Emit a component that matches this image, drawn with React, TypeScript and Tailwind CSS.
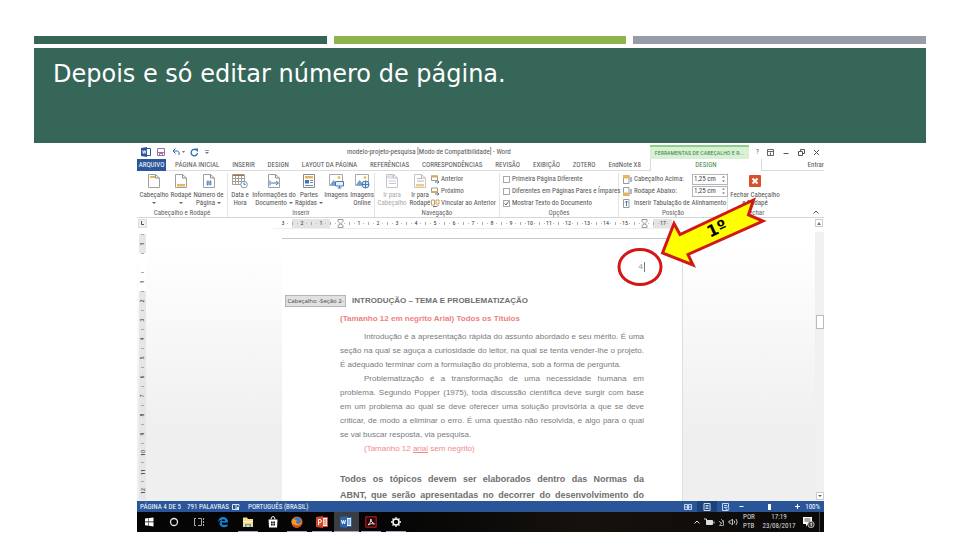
import type { ReactNode } from "react";
import clsx from "clsx";

const tabs = [
  "PÁGINA INICIAL", "INSERIR", "DESIGN", "LAYOUT DA PÁGINA", "REFERÊNCIAS",
  "CORRESPONDÊNCIAS", "REVISÃO", "EXIBIÇÃO", "ZOTERO", "EndNote X8",
];

const rulerMarks = ["3", "2", "1", "", "1", "2", "3", "4", "5", "6", "7", "8", "9", "10", "11", "12", "13", "14", "15", "", "17"];
const sideMarks = ["1", "", "1", "2", "3", "4", "5", "6", "7", "8", "9", "10", "11", "12"];

const introLines = [
  { text: "Introdução é a apresentação rápida do assunto abordado e seu mérito. É uma", indent: true, fill: true },
  { text: "seção na qual se aguça a curiosidade do leitor, na qual se tenta vender-lhe o projeto.", fill: true },
  { text: "É adequado terminar com a formulação do problema, sob a forma de pergunta." },
  { text: "Problematização é a transformação de uma necessidade humana em", indent: true, fill: true },
  { text: "problema. Segundo Popper (1975), toda discussão científica deve surgir com base", fill: true },
  { text: "em um problema ao qual se deve oferecer uma solução provisória a que se deve", fill: true },
  { text: "criticar, de modo a eliminar o erro. É uma questão não resolvida, e algo para o qual", fill: true },
  { text: "se vai buscar resposta, via pesquisa." },
];

function PageIcon({ children, faded }: { children?: ReactNode; faded?: boolean }) {
  return (
    <svg viewBox="0 0 16 16" className={clsx("h-4 w-4", faded && "opacity-60")} fill="none">
      <path d="M2.500 1.500h7l4 3.500v9.500h-11z" fill="#fff" stroke="#a0a0a0" />
      <path d="M9.500 1.500v3.500h4" stroke="#8a8a8a" />
      {children}
    </svg>
  );
}

function CalendarIcon() {
  return (
    <svg viewBox="0 0 16 16" className="h-4 w-4" fill="none">
      <path d="M.5 2.500h12v9H.5zM.5 5.500h12M.5 8.500h12M3.500 2.500v9M6.500 2.500v9M9.500 2.500v9" stroke="#a79f95" />
      <path d="M.5 2h12" stroke="#8c6b4f" strokeWidth="1.500" />
      <circle cx="12" cy="11.500" r="3.300" fill="#fff" stroke="#7b95b8" />
      <path d="M12 9.500v2h1.500" stroke="#6d6d6d" />
    </svg>
  );
}

function PictureIcon({ online }: { online?: boolean }) {
  return (
    <svg viewBox="0 0 16 16" className="h-4 w-4" fill="none">
      <path d="M1.500 1.500h13v11h-13z" fill="#fff" stroke="#aaa" />
      <circle cx="11" cy="4.500" r="1.500" fill="#edc15c" />
      <path d="M2 12l3.500-5 2.500 3 2-2 2 4z" fill="#6f9fd2" />
      {online ? (
        <>
          <circle cx="11.500" cy="11.500" r="3.500" fill="#dbe9f8" stroke="#4379b8" />
          <path d="M8 11.500h7M11.500 8v7" stroke="#4379b8" />
        </>
      ) : (
        <>
          <path d="M7.500 8.500h8v4.500h-8z" fill="#e7f1fb" stroke="#4379b8" />
          <path d="M9.500 15h4M11.500 13v2" stroke="#4379b8" />
        </>
      )}
    </svg>
  );
}

function StepIcon({ kind }: { kind: "up" | "down" | "link" }) {
  return (
    <svg viewBox="0 0 9 9" className="h-[9px] w-[9px] shrink-0" fill="none">
      {kind === "link" ? (
        <>
          <path d="M.5 1h3v5h-3zM5 1h3v4H5z" stroke="#c9a15a" />
          <path d="M2 7.500h4l1.500-1.500" stroke="#777" />
        </>
      ) : (
        <>
          <path d="M.5 1h6v4.500h-6z" stroke="#999" />
          <path d={kind === "up" ? "M0 1.500h7" : "M0 5h7"} stroke="#dda94c" strokeWidth="2" />
          <path d="M4 7h4M6.500 5.500l1.500 1.500-1.500 1.500" stroke="#4379b8" />
        </>
      )}
    </svg>
  );
}

function MarginIcon({ kind }: { kind: "top" | "bottom" | "tab" }) {
  return (
    <svg viewBox="0 0 9 9" className="h-[9px] w-[9px] shrink-0" fill="none">
      <path d="M.5.5h5.500v8H.5z" stroke="#999" />
      {kind === "top" && <path d="M0 0h6.500v3.500H0z" fill="#e6b65c" />}
      {kind === "bottom" && <path d="M0 5.500h6.500V9H0z" fill="#e6b65c" />}
      {kind === "tab" ? <path d="M3.500 2v5M2 3.500L3.500 2 5 3.500" stroke="#4379b8" /> : <path d="M8 2v5" stroke="#4379b8" />}
    </svg>
  );
}

function BigButton({ icon, lines, caret, faded, className }: { icon: ReactNode; lines: string[]; caret?: boolean; faded?: boolean; className: string }) {
  return (
    <button type="button" className={clsx("flex shrink-0 flex-col items-center whitespace-nowrap", faded && "text-[#aaa]", className)}>
      {icon}
      {lines.map((line, i) => (
        <span key={line} className="flex h-2 items-center gap-[2px] leading-2 first-of-type:mt-[2px]">
          {line}
          {caret && lines.length > 1 && i === lines.length - 1 && <Caret />}
        </span>
      ))}
      {caret && lines.length === 1 && <span className="flex h-2 items-center"><Caret /></span>}
    </button>
  );
}

function Caret() {
  return <svg viewBox="0 0 4 3" className="h-[3px] w-1"><path d="M0 0h4L2 2z" fill="#666" /></svg>;
}

function Group({ label, className, children }: { label: string; className: string; children: ReactNode }) {
  return (
    <section className={clsx("flex shrink-0 flex-col border-r border-[#e4e4e4]", className)}>
      <div className="flex h-9 shrink-0 items-start">{children}</div>
      <h2 className="text-center leading-2 text-[#666]">{label}</h2>
    </section>
  );
}

function Option({ label, checked }: { label: string; checked?: boolean }) {
  return (
    <label className="flex h-3 items-center gap-[2px] whitespace-nowrap">
      <span className="grid">
        <input type="checkbox" defaultChecked={checked} className="peer col-start-1 row-start-1 h-[7px] w-[7px] appearance-none border border-[#a8a8a8] bg-white" />
        <svg viewBox="0 0 7 7" className="pointer-events-none invisible col-start-1 row-start-1 h-[7px] w-[7px] peer-checked:visible" fill="none">
          <path d="M1.500 3.500L3 5l2.500-3.500" stroke="#555" />
        </svg>
      </span>
      {label}
    </label>
  );
}

function Distance({ id }: { id: string }) {
  return (
    <span className="flex h-[11px] w-9 items-center border border-[#b5b5b5] bg-white">
      <input id={id} defaultValue="1,25 cm" className="w-[27px] pl-px leading-2 text-[#444] outline-none" />
      <button type="button" aria-label="Ajustar" className="flex h-full w-[7px] items-center justify-center">
        <svg viewBox="0 0 5 8" className="h-2 w-[5px]" fill="#666"><path d="M1 2.500h3L2.500 1zM1 5.500h3L2.500 7z" /></svg>
      </button>
    </span>
  );
}

function TitleBar() {
  return (
    <header className="flex h-[14px] items-center">
      <div className="flex w-[210px] shrink-0 items-center pl-1">
        <svg viewBox="0 0 10 10" className="h-[10px] w-[10px]" fill="none">
          <path d="M5.500 1.500h4v7h-4" fill="#fff" stroke="#2b579a" />
          <path d="M0 1l6-1v10L0 9z" fill="#2b579a" />
          <path d="M1.500 3.500l.8 3 .9-3 .9 3 .8-3" stroke="#fff" strokeWidth=".8" />
        </svg>
        <button type="button" aria-label="Salvar" className="ml-[6px]">
          <svg viewBox="0 0 8 8" className="h-2 w-2" fill="none"><path d="M.5.5h7v7h-7z" stroke="#9a6fa8" /><path d="M1 4.500h6M2.500 7.500v-2h3v2" stroke="#9a6fa8" /></svg>
        </button>
        <button type="button" aria-label="Desfazer" className="ml-[7px]">
          <svg viewBox="0 0 13 8" className="h-2 w-[13px]" fill="none"><path d="M3.500.5L1 3l2.500 2.500M1 3h4.500q2.500.5 1.500 4" stroke="#2b6cb8" /><path d="M10 3h3l-1.500 2z" fill="#777" /></svg>
        </button>
        <button type="button" aria-label="Refazer" className="ml-[5px]">
          <svg viewBox="0 0 9 9" className="h-[9px] w-[9px]" fill="none"><path d="M6.500 2.300A3.200 3.200 0 1 0 7.500 5" stroke="#2b6cb8" strokeWidth="1.300" /><path d="M4.500.5h3.500V4z" fill="#2b6cb8" /></svg>
        </button>
        <svg viewBox="0 0 5 5" className="ml-[6px] h-[5px] w-[5px]"><path d="M0 0h4v.8H0zM0 2h4L2 4z" fill="#777" /></svg>
      </div>
      <h1 className="shrink-0 whitespace-nowrap">modelo-projeto-pesquisa [Modo de Compatibilidade] - Word</h1>
      <div className="ml-auto flex h-full shrink-0 items-center">
        <div className="flex h-full w-[99px] items-center justify-center whitespace-nowrap border-t-2 border-[#8fce89] bg-[#d8f0d4] text-[6px] text-[#3c8a3c]">
          FERRAMENTAS DE CABEÇALHO E R...
        </div>
        <div className="flex w-[75px] items-center justify-between pr-1 pl-[7px] text-[#555]">
          <button type="button">?</button>
          <button type="button" aria-label="Opções da faixa"><svg viewBox="0 0 7 7" className="h-[7px] w-[7px]" fill="none" stroke="#666"><path d="M.5.500h6v6h-6zM.5 2.500h6M3.500 6V3.500" /></svg></button>
          <button type="button" aria-label="Minimizar"><svg viewBox="0 0 7 7" className="h-[7px] w-[7px]" stroke="#555"><path d="M1.500 4.500h5" /></svg></button>
          <button type="button" aria-label="Restaurar"><svg viewBox="0 0 7 7" className="h-[7px] w-[7px]" fill="none" stroke="#555"><path d="M.5 2.500h4v4h-4zM2.500 2.500v-2h4v4h-2" /></svg></button>
          <button type="button" aria-label="Fechar"><svg viewBox="0 0 7 7" className="h-[7px] w-[7px]" stroke="#555"><path d="M1 1l5 5M6 1L1 6" /></svg></button>
        </div>
      </div>
    </header>
  );
}

function TabRow() {
  return (
    <nav className="flex h-3 items-stretch">
      <button type="button" className="w-[29px] shrink-0 bg-[#2b579a] text-white">ARQUIVO</button>
      <div className="flex w-[484px] shrink-0 items-center justify-between border-b border-[#dcdcdc] pr-[9px] pl-[9px]">
        {tabs.map((tab) => (
          <button key={tab} type="button" className="whitespace-nowrap">{tab}</button>
        ))}
      </div>
      <button type="button" className="w-[112px] shrink-0 border-x border-[#dcdcdc] text-[#3c8a3c]">DESIGN</button>
      <div className="flex flex-1 items-center justify-end overflow-hidden border-b border-[#dcdcdc]">
        <button type="button">Entrar</button>
      </div>
    </nav>
  );
}

function Ribbon() {
  return (
    <div className="flex h-[47px] border-b border-[#d6d6d6] pt-[2px]">
      <Group label="Cabeçalho e Rodapé" className="w-[91px]">
        <BigButton className="w-[34px]" lines={["Cabeçalho"]} caret icon={<PageIcon><path d="M4 3h5v2H4z" fill="#e6b65c" /></PageIcon>} />
        <BigButton className="w-5" lines={["Rodapé"]} caret icon={<PageIcon><path d="M4 11h8v2.500H4z" fill="#e6b65c" /></PageIcon>} />
        <BigButton className="w-[35px]" lines={["Número de", "Página"]} caret icon={<PageIcon><path d="M5.500 7.500h5v5h-5z" fill="#dce9f7" /><path d="M7 7.500l-.5 5M9.500 7.500l-.5 5M5.500 9h5M5.500 11h5" stroke="#3f74b5" strokeWidth=".8" /></PageIcon>} />
      </Group>
      <Group label="Inserir" className="w-[147px]">
        <BigButton className="w-6" lines={["Data e", "Hora"]} icon={<CalendarIcon />} />
        <BigButton className="w-11" lines={["Informações do", "Documento"]} caret icon={<PageIcon><path d="M4 7.500v5M5 10h7M10 8l2.500 2-2.500 2" stroke="#3f74b5" /></PageIcon>} />
        <BigButton className="w-[26px]" lines={["Partes", "Rápidas"]} caret icon={
          <svg viewBox="0 0 16 16" className="h-4 w-4" fill="none">
            <path d="M2.500 1.500h11v13h-11z" fill="#fff" stroke="#8a8a8a" />
            <path d="M4 3h8v2.500H4z" fill="#e6b65c" />
            <path d="M4 7h4v3.500H4z" fill="#3f74b5" />
            <path d="M9 7.500h3M9 9.500h3M4 12.500h8" stroke="#6b8fbd" />
          </svg>
        } />
        <BigButton className="w-7" lines={["Imagens"]} icon={<PictureIcon />} />
        <BigButton className="w-6" lines={["Imagens", "Online"]} icon={<PictureIcon online />} />
      </Group>
      <Group label="Navegação" className="w-[125px]">
        <BigButton className="w-[34px]" faded lines={["Ir para", "Cabeçalho"]} icon={<PageIcon faded><path d="M4 3h5v2H4zM5 8h7M5 10.500h7" stroke="#b49bbb" /></PageIcon>} />
        <BigButton className="w-[22px]" lines={["Ir para", "Rodapé"]} icon={<PageIcon faded><path d="M4 11h8v2.500H4z" fill="#e6a93c" /><path d="M5 5.500h5M5 8h7" stroke="#888" /></PageIcon>} />
        <div className="flex flex-col">
          {([["up", "Anterior"], ["down", "Próximo"], ["link", "Vincular ao Anterior"]] as const).map(([kind, label]) => (
            <button key={kind} type="button" className="flex h-3 items-center gap-px whitespace-nowrap"><StepIcon kind={kind} />{label}</button>
          ))}
        </div>
      </Group>
      <Group label="Opções" className="w-[119px]">
        <div className="flex flex-col pl-[3px]">
          <Option label="Primeira Página Diferente" />
          <Option label="Diferentes em Páginas Pares e Ímpares" />
          <Option label="Mostrar Texto do Documento" checked />
        </div>
      </Group>
      <Group label="Posição" className="w-[109px]">
        <div className="flex flex-col pl-1">
          <div className="flex h-3 items-center gap-[2px]">
            <MarginIcon kind="top" /><label htmlFor="acima" className="w-[56px] whitespace-nowrap">Cabeçalho Acima:</label><Distance id="acima" />
          </div>
          <div className="flex h-3 items-center gap-[2px]">
            <MarginIcon kind="bottom" /><label htmlFor="abaixo" className="w-[56px] whitespace-nowrap">Rodapé Abaixo:</label><Distance id="abaixo" />
          </div>
          <button type="button" className="flex h-3 items-center gap-[2px] whitespace-nowrap"><MarginIcon kind="tab" />Inserir Tabulação de Alinhamento</button>
        </div>
      </Group>
      <section className="flex w-[54px] shrink-0 flex-col">
        <div className="flex h-9 shrink-0 justify-center">
          <BigButton className="w-[50px]" lines={["Fechar Cabeçalho", "e Rodapé"]} icon={
            <svg viewBox="0 0 16 16" className="h-4 w-4" fill="none"><rect x="2" y="2" width="12" height="12" rx="1" fill="#d9512c" /><path d="M5.500 5.500l5 5M10.500 5.500l-5 5" stroke="#fff" strokeWidth="2" /></svg>
          } />
        </div>
        <h2 className="text-center leading-2 text-[#666]">Fechar</h2>
      </section>
      <div className="flex flex-1 items-end justify-end pr-[5px] pb-[3px]">
        <button type="button" aria-label="Recolher"><svg viewBox="0 0 6 4" className="h-1 w-[6px]" fill="none" stroke="#555"><path d="M.5 3.500L3 1l2.500 2.500" /></svg></button>
      </div>
    </div>
  );
}

function Ruler() {
  return (
    <div className="flex h-[14px] items-start">
      <div className="mt-px ml-px flex h-[9px] w-[9px] shrink-0 items-center justify-center border border-[#ddd] bg-[#f0f0f0]">
        <svg viewBox="0 0 5 5" className="h-[5px] w-[5px]" fill="none" stroke="#555"><path d="M1.500 0v3.500H4" /></svg>
      </div>
      <div className="ml-[126px] flex h-[11px] w-[409px] shrink-0 items-center border-b border-[#eee] text-[6px]">
        {rulerMarks.map((mark, i) => (
          <span key={i} className={clsx("flex h-[9px] w-[19px] shrink-0 items-center", i === 1 || i === 2 || i > 19 ? "bg-[#e4e4e4]" : "bg-white")}>
            <i className={clsx("h-[3px] w-px", i > 0 && "bg-[#aaa]")} />
            <i className={clsx("ml-1 h-px w-px", i > 0 && "bg-[#bbb]")} />
            <b className="flex-1 text-center font-normal text-[#333]">
              {mark || <svg viewBox="0 0 7 9" className="mx-auto h-[9px] w-[7px]" fill="#fff" stroke="#999"><path d="M1 .5h5v2L3.500 5 1 2.500zM1 8.500v-2L3.500 5 6 6.500v2z" /></svg>}
            </b>
            <i className="mr-1 h-px w-px bg-[#bbb]" />
          </span>
        ))}
      </div>
      <button type="button" aria-label="Rolar para cima" className="mt-px mr-px ml-auto flex h-2 w-2 items-center justify-center border border-[#ccc] bg-white">
        <svg viewBox="0 0 4 3" className="h-[3px] w-1"><path d="M0 3h4L2 0z" fill="#777" /></svg>
      </button>
    </div>
  );
}

function DocumentPane() {
  return (
    <main className="flex h-[269px] overflow-hidden bg-linear-to-b from-white from-5% to-[#efefef] to-75%">
      <div className="flex w-[11px] shrink-0 flex-col pt-[2px] pl-[2px] text-[6px]">
        {sideMarks.map((mark, i) => (
          <span key={i} className={clsx("flex h-[19px] w-[7px] shrink-0 flex-col items-center", i === 1 || i === 2 ? "bg-white" : "bg-[#e6e6e6]")}>
            <i className="h-px w-[3px] bg-[#aaa]" />
            <b className="flex flex-1 -rotate-90 items-center justify-center font-normal text-[#333]">{mark}</b>
          </span>
        ))}
      </div>
      <div className="ml-[134px] flex w-[401px] shrink-0 flex-col bg-white pt-[6px]">
        <article className="flex-1 border-t border-r border-t-[#c8c8c8] border-r-[#dedede] font-['Liberation_Sans',Arial,sans-serif] text-[8px] text-[#7b7b7b]">
          <div className="flex h-14 items-center justify-end pr-[37px]">
            <span className="border-r border-[#777] pr-px leading-[10px] text-[#999]">4</span>
          </div>
          <div className="flex h-3 items-center gap-[6px] pl-[3px]">
            <span className="flex h-3 w-[61px] items-center justify-center whitespace-nowrap border border-[#b5b5b5] bg-[#e1e1e1] font-['Open_Sans',sans-serif] text-[6px] text-[#444]">Cabeçalho -Seção 2-</span>
            <h2 className="font-bold whitespace-nowrap text-[#707070]">INTRODUÇÃO – TEMA E PROBLEMATIZAÇÃO</h2>
          </div>
          <div className="pr-[38px] pl-[58px] whitespace-nowrap">
            <h3 className="mt-[5px] leading-[14px] font-bold text-[#ee7f7f]">(Tamanho 12 em negrito Arial) Todos os Títulos</h3>
            <div className="mt-1 leading-[14px]">
              {introLines.map((line) => (
                <p key={line.text} className={clsx(line.indent && "pl-6", line.fill && "[text-align-last:justify]")}>{line.text}</p>
              ))}
              <p className="pl-6 text-[#f08a8a]">(Tamanho 12 <u>arial</u> sem negrito)</p>
            </div>
            <div className="mt-[15px] text-[9px] leading-4 font-bold text-[#6f6f6f]">
              <p className="[text-align-last:justify]">Todos os tópicos devem ser elaborados dentro das Normas da</p>
              <p className="[text-align-last:justify]">ABNT, que serão apresentadas no decorrer do desenvolvimento do</p>
            </div>
          </div>
        </article>
      </div>
      <div className="ml-auto flex w-[9px] flex-col items-center bg-[#f0f0f0]">
        <div className="mt-[83px] h-[14px] w-2 border border-[#bbb] bg-white" />
        <button type="button" aria-label="Rolar para baixo" className="mt-auto mb-px flex h-2 w-2 items-center justify-center border border-[#ccc] bg-white">
          <Caret />
        </button>
      </div>
    </main>
  );
}

function StatusBar() {
  return (
    <footer className="flex h-[11px] items-center bg-[#2a5599] text-white">
      <span className="w-[50px] shrink-0 whitespace-nowrap pl-[3px]">PÁGINA 4 DE 5</span>
      <span className="w-[45px] shrink-0 whitespace-nowrap">791 PALAVRAS</span>
      <svg viewBox="0 0 8 8" className="h-2 w-2" fill="none" stroke="#dfe8f5"><path d="M4 1.500H.5v5H4zM4 1.500h3v2M4 6.500h3M5 4l2 2M7 4L5 6" /></svg>
      <span className="ml-2 whitespace-nowrap">PORTUGUÊS (BRASIL)</span>
      <div className="ml-auto flex shrink-0 items-center">
        <button type="button" aria-label="Leitura" className="flex w-[18px] justify-center"><svg viewBox="0 0 8 8" className="h-2 w-2" fill="none" stroke="#c9d8ee"><path d="M.5 1.500h3v5h-3zM4.500 1.500h3v5h-3zM1 4h2M5 4h2" /></svg></button>
        <button type="button" aria-label="Layout" className="flex h-[11px] w-5 items-center justify-center bg-[#1c4379]"><svg viewBox="0 0 8 8" className="h-2 w-2" fill="none" stroke="#c9d8ee"><path d="M1 .5h6v7H1zM2.500 2.500h3M2.500 4h3M2.500 5.500h3" /></svg></button>
        <button type="button" aria-label="Web" className="flex w-[18px] justify-center"><svg viewBox="0 0 8 8" className="h-2 w-2" fill="none" stroke="#c9d8ee"><path d="M6.500 7.500h-6v-7h6V4M2 2.500h3M2 4.500h2" /><circle cx="5.500" cy="5.500" r="1.500" /></svg></button>
        <button type="button" aria-label="Diminuir" className="flex w-3 justify-center"><svg viewBox="0 0 5 5" className="h-[5px] w-[5px]" stroke="#fff"><path d="M.5 2.500h4" /></svg></button>
        <input type="range" aria-label="Zoom" className="h-2 w-11 appearance-none bg-transparent [&::-webkit-slider-thumb]:h-[6px] [&::-webkit-slider-thumb]:w-[3px] [&::-webkit-slider-thumb]:appearance-none [&::-webkit-slider-thumb]:bg-white" />
        <button type="button" aria-label="Aumentar" className="flex w-3 justify-center"><svg viewBox="0 0 5 5" className="h-[5px] w-[5px]" stroke="#fff"><path d="M0 2.500h5M2.500 0v5" /></svg></button>
        <span className="w-[21px] pr-1 text-right">100%</span>
      </div>
    </footer>
  );
}

function OfficeTile({ color, letter }: { color: string; letter: ReactNode }) {
  return (
    <svg viewBox="0 0 12 12" className="h-3 w-3" fill="none">
      <path d="M6 1.500h5.500v9H6z" fill="#fff" stroke={color} />
      <path d="M7.500 4h3M7.500 6h3M7.500 8h3" stroke={color} />
      <path d="M0 1l7-1v12l-7-1z" fill={color} />
      {letter}
    </svg>
  );
}

const taskIcons = [
  { name: "Iniciar", art: <svg viewBox="0 0 12 12" className="h-3 w-3" fill="#fff"><path d="M2 2.500l3.500-.5v3.500H2zM6 2l4.500-.5v4H6zM2 6.200h3.500v3.500L2 9.200zM6 6.200h4.500v4.300L6 9.800z" /></svg> },
  { name: "Cortana", art: <svg viewBox="0 0 12 12" className="h-3 w-3" fill="none" stroke="#e8e8e8" strokeWidth="1.300"><circle cx="6" cy="6" r="3.500" /></svg> },
  { name: "Visão de tarefas", art: <svg viewBox="0 0 12 12" className="h-3 w-3" fill="none" stroke="#aaa"><path d="M3 2.500H1.500v7H3M5 2.500h3.500v7H5M10.500 2v2M10.500 5v2M10.500 8v2" /></svg> },
  { name: "Edge", art: <svg viewBox="0 0 12 12" className="h-3 w-3" fill="none"><path d="M1 6Q2 .8 6.500 1 11 1.500 11 6.500H4.500Q4.800 9 7 9t3.500-.8v2Q8 11.700 5.500 11 2 9.800 2.800 6.200q.5-1.900 2.200-2.600Q2.500 3.800 1 6zM4.700 5h3.600Q8.200 3.200 6.500 3.200T4.700 5z" fill="#1683d8" fillRule="evenodd" /></svg> },
  { name: "Explorador", open: true, art: <svg viewBox="0 0 12 12" className="h-3 w-3"><path d="M1 1.500h4l1 1.500h5v8H1z" fill="#f7dd86" /><path d="M1 5h10v1H1z" fill="#fff4c6" /><path d="M3 11V8h6v3H7.500V9h-3v2z" fill="#4d9fd8" /></svg> },
  { name: "Loja", art: <svg viewBox="0 0 12 12" className="h-3 w-3" fill="none"><path d="M1.500 3.500h9l-.5 8H2z" fill="#fff" /><path d="M4 3.500q0-3 2-3t2 3" stroke="#fff" /><path d="M4 5.500h1.700v1.700H4zM6.300 5.500H8v1.700H6.300zM4 7.800h1.700v1.700H4zM6.300 7.800H8v1.700H6.300z" fill="#111" /></svg> },
  { name: "Firefox", open: true, art: <svg viewBox="0 0 12 12" className="h-3 w-3"><circle cx="6" cy="6" r="5.500" fill="#e66a1f" /><circle cx="6.500" cy="5" r="3.500" fill="#387fc2" /><path d="M1 3q2 1 3 .5l2 1Q4 6 6 7.500T10.500 6q0 5-4.500 5.500T.5 6z" fill="#f39a27" /><path d="M1.500 7Q3 9.500 6 9.500T11 7q-1 4.500-5 4.500T1.500 7z" fill="#d8431f" /></svg> },
  { name: "PowerPoint", open: true, art: <OfficeTile color="#d24726" letter={<path d="M2.500 9V3.500h1.500q1.500.2 1.500 1.500T4 6.700H2.500" stroke="#fff" />} /> },
  { name: "Word", open: true, active: true, art: <OfficeTile color="#2b63b0" letter={<path d="M1.500 4l1 4 1-3.500 1 3.500 1-4" stroke="#fff" />} /> },
  { name: "Acrobat", open: true, art: <svg viewBox="0 0 12 12" className="h-3 w-3" fill="none"><path d="M.8.800h10.400v10.400H.8z" fill="#2c0606" stroke="#c3201f" /><path d="M3 9q3.500-3 2.800-6Q6 6.500 9.500 8 6 6.800 3 9z" stroke="#eee" strokeWidth=".9" /></svg> },
  { name: "Configurações", open: true, art: <svg viewBox="0 0 12 12" className="h-3 w-3" fill="none" stroke="#fff"><circle cx="6" cy="6" r="3" strokeWidth="1.500" /><path d="M6 1v1.500M6 9.500V11M1 6h1.500M9.500 6H11M2.500 2.500l1 1M8.500 8.500l1 1M9.500 2.500l-1 1M3.500 8.500l-1 1" strokeWidth="1.300" /></svg> },
];

function Taskbar() {
  return (
    <footer className="flex h-5 items-stretch bg-linear-to-r from-[#050505] from-35% via-[#15110d] via-65% to-[#0b0908] text-[#ddd]">
      <div className="flex w-[271px] shrink-0">
        {taskIcons.map((item) => (
          <button key={item.name} type="button" aria-label={item.name} className={clsx("flex flex-1 flex-col items-center", item.active && "bg-[#3a3d42]")}>
            <span className="flex flex-1 items-center">{item.art}</span>
            <span className={clsx("h-px", item.active ? "w-full" : "w-5", item.open && "bg-[#a9a3c4]")} />
          </button>
        ))}
      </div>
      <div className="ml-auto flex shrink-0 items-center">
        <svg viewBox="0 0 46 12" className="h-3 w-[46px]" fill="none" stroke="#ddd">
          <path d="M2.500 7.500L5 5l2.500 2.500" />
          <path d="M14.500 4.500h6v4h-6z" fill="#ddd" /><path d="M12 3h2.500v3M22 5.500v2" />
          <path d="M27.500 9.500l4-5v5zM27 5l3 3M29 3l2 2" stroke="#999" />
          <path d="M37 5h1.500l2-2v6l-2-2H37zM42 4.500q1.500 1.500 0 3M44 3q2.500 3 0 6" stroke="#bbb" />
        </svg>
        <span className="ml-1 w-4 pl-px leading-[9px]">POR<br />PTB</span>
        <time className="ml-[3px] w-9 text-center leading-[9px]">17:19<br />23/08/2017</time>
        <svg viewBox="0 0 14 14" className="ml-1 h-[14px] w-[14px]" fill="none">
          <path d="M2 2h9v7H7l-2 2.500V9H2z" fill="#fff" />
          <path d="M3.500 4h6M3.500 6h6" stroke="#555" />
          <circle cx="10" cy="9.500" r="3.200" fill="#444" stroke="#ddd" strokeWidth=".7" />
          <path d="M9.500 8.500l.8-.5v3" stroke="#fff" strokeWidth=".8" />
        </svg>
        <span className="ml-1 h-5 w-px bg-[#444]" />
        <span className="w-1" />
      </div>
    </footer>
  );
}

function Callout() {
  return (
    <div className="pointer-events-none absolute top-[50px] left-[478px]">
      <svg viewBox="0 0 155 95" className="h-[95px] w-[155px]" fill="none" stroke="#d01818" strokeWidth="3">
        <path d="M47.500 58L59 28.500l6 11L138.500 5l-5 15 14.500 6-75 33.500 5 10.500z" fill="#ff0" />
        <ellipse cx="25" cy="72" rx="21" ry="17.500" />
      </svg>
      <span className="absolute top-6 left-[92px] -rotate-25 font-['DejaVu_Sans',sans-serif] text-base leading-5 font-bold text-black">1º</span>
    </div>
  );
}

export default function App() {
  return (
    <div className="min-h-screen bg-white px-[34px] pt-9">
      <div className="grid grid-cols-3 gap-[7px]">
        <div className="h-2 bg-[#366658]" />
        <div className="h-2 bg-[#8fb44c]" />
        <div className="h-2 bg-[#979da8]" />
      </div>
      <div className="mt-1 h-[95px] bg-[#366658] px-[19px] pt-3">
        <h1 className="font-['DejaVu_Sans',Verdana,sans-serif] text-2xl leading-7 text-white">Depois e só editar número de página.</h1>
      </div>
      <div className="relative mr-[102px] ml-[103px] mt-[2px] bg-white font-['Roboto_Condensed','Open_Sans',sans-serif] text-[7px] leading-2 text-[#555]">
        <TitleBar />
        <TabRow />
        <Ribbon />
        <Ruler />
        <DocumentPane />
        <StatusBar />
        <Taskbar />
        <Callout />
      </div>
    </div>
  );
}
